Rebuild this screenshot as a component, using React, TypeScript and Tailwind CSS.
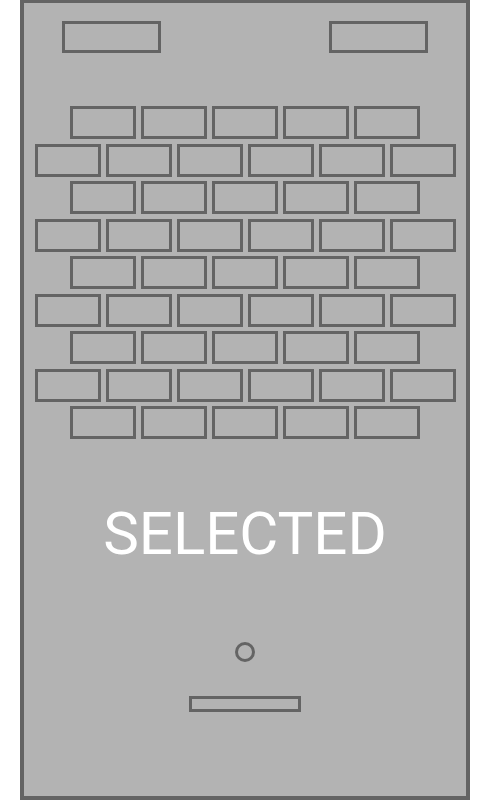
const SHORT_ROW = 5;
const WIDE_ROW = 6;
const ROWS = 9;

function Brick() {
  return <div className="w-[66px] h-[33px] border-[3px] border-[#646464] box-border" />;
}

function BrickRow({ count }: { count: number }) {
  return (
    <div className="flex justify-center gap-[5px]">
      {Array.from({ length: count }).map((_, i) => (
        <Brick key={i} />
      ))}
    </div>
  );
}

export default function App() {
  return (
    <div className="w-[490px] h-[800px] bg-white">
      <div className="ml-[20px] w-[450px] h-[800px] box-border border-[4px] border-t-[3px] border-[#646464] bg-[#b3b3b3] flex flex-col">
        <div className="flex justify-between px-[38px] pt-[18px]">
          <div className="w-[99px] h-[32px] border-[3px] border-[#646464]" />
          <div className="w-[99px] h-[32px] border-[3px] border-[#646464]" />
        </div>

        <div className="mt-[53px] flex flex-col gap-[4.5px]">
          {Array.from({ length: ROWS }).map((_, i) => (
            <BrickRow key={i} count={i % 2 === 0 ? SHORT_ROW : WIDE_ROW} />
          ))}
        </div>

        <div className="mt-[65px] h-[60px] leading-[60px] text-center text-white text-[60px] font-['Roboto',sans-serif]">
          SELECTED
        </div>

        <div className="mt-[78px] flex justify-center">
          <div className="w-[20px] h-[20px] rounded-full border-[3px] border-[#646464]" />
        </div>

        <div className="mt-[34px] flex justify-center">
          <div className="w-[112px] h-[16px] border-[3px] border-[#646464]" />
        </div>
      </div>
    </div>
  );
}
